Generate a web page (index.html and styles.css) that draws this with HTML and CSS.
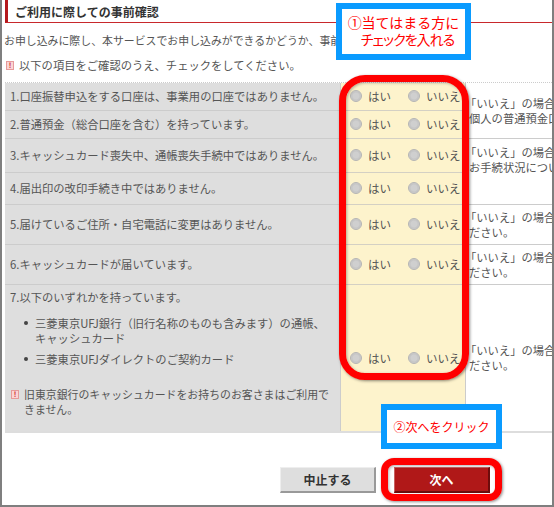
FILE: index.html
```html
<!DOCTYPE html>
<html lang="ja">
<head>
<meta charset="utf-8">
<title>ご利用に際しての事前確認</title>
<link rel="stylesheet" href="styles.css">
</head>
<body>
<div class="page">
  <h2 class="title">ご利用に際しての事前確認</h2>
  <p class="intro">お申し込みに際し、本サービスでお申し込みができるかどうか、事前にご確認ください。</p>
  <p class="notice"><span class="mark">!</span>以下の項目をご確認のうえ、チェックをしてください。</p>

  <div class="table">
    <div class="q r1">1.口座振替申込をする口座は、事業用の口座ではありません。</div>
    <div class="a r1"><label><input type="radio" name="q1">はい</label><label><input type="radio" name="q1">いいえ</label></div>
    <div class="n n1"><div>「いいえ」の場合は、<br>個人の普通預金口座を</div></div>

    <div class="q r2">2.普通預金（総合口座を含む）を持っています。</div>
    <div class="a r2"><label><input type="radio" name="q2">はい</label><label><input type="radio" name="q2">いいえ</label></div>

    <div class="q r3">3.キャッシュカード喪失中、通帳喪失手続中ではありません。</div>
    <div class="a r3"><label><input type="radio" name="q3">はい</label><label><input type="radio" name="q3">いいえ</label></div>
    <div class="n n3"><div>「いいえ」の場合は、<br>お手続状況について</div></div>

    <div class="q r4">4.届出印の改印手続き中ではありません。</div>
    <div class="a r4"><label><input type="radio" name="q4">はい</label><label><input type="radio" name="q4">いいえ</label></div>

    <div class="q r5">5.届けているご住所・自宅電話に変更はありません。</div>
    <div class="a r5"><label><input type="radio" name="q5">はい</label><label><input type="radio" name="q5">いいえ</label></div>
    <div class="n n5"><div>「いいえ」の場合は、<br>ださい。</div></div>

    <div class="q r6">6.キャッシュカードが届いています。</div>
    <div class="a r6"><label><input type="radio" name="q6">はい</label><label><input type="radio" name="q6">いいえ</label></div>
    <div class="n n6"><div>「いいえ」の場合は、<br>ださい。</div></div>

    <div class="q r7">
      <div>7.以下のいずれかを持っています。</div>
      <ul class="list">
        <li>三菱東京UFJ銀行（旧行名称のものも含みます）の通帳、<br>キャッシュカード</li>
        <li>三菱東京UFJダイレクトのご契約カード</li>
      </ul>
      <div class="warn"><span class="mark">!</span><span>旧東京銀行のキャッシュカードをお持ちのお客さまはご利用できません。</span></div>
    </div>
    <div class="a r7 low"><label><input type="radio" name="q7">はい</label><label><input type="radio" name="q7">いいえ</label></div>
    <div class="n n7"><div>「いいえ」の場合は、<br>ださい。</div></div>
  </div>

  <div class="buttons">
    <button class="btn cancel" type="button">中止する</button>
    <button class="btn next" type="button">次へ</button>
  </div>

  <div class="callout c1">①当てはまる方に<br><span class="tight">チェックを入れる</span></div>
  <div class="callout c2">②次へをクリック</div>
  <div class="ring ring-a"></div>
  <div class="ring ring-b"></div>
</div>
</body>
</html>
```
FILE: styles.css
```css
* { box-sizing: border-box; }
html, body { margin: 0; padding: 0; background: #fff; }
body { width: 554px; height: 507px; overflow: hidden; }
.page {
  position: relative;
  width: 554px;
  height: 507px;
  overflow: hidden;
  border-left: 2px solid #7f7f7f;
  border-right: 2px solid #7f7f7f;
  border-bottom: 2px solid #7f7f7f;
  font-family: "Noto Sans CJK JP", sans-serif;
  font-size: 11.3px;
  line-height: 15px;
  color: #555;
  background: #fff;
}
.title {
  margin: 0 0 0 3px;
  height: 23px;
  padding: 3px 0 0 7px;
  border-left: 3px solid #b5181c;
  border-bottom: 1px solid #c8282c;
  font-size: 12px;
  font-weight: 700;
  line-height: 18px;
  color: #333;
}
.intro {
  margin: 10px 0 0 2px;
  font-size: 10.9px;
  white-space: nowrap;
}
.notice {
  margin: 10px 0 0 4px;
  display: flex;
  align-items: center;
  white-space: nowrap;
}
.mark {
  flex: none;
  display: block;
  width: 8px;
  height: 9px;
  margin-right: 5px;
  background: #fbd4d4;
  border: 1px solid #e79a9a;
  color: #c8181c;
  font-size: 7px;
  font-weight: 700;
  line-height: 7px;
  text-align: center;
}
.table {
  margin: 9px 0 0 3px;
  display: grid;
  grid-template-columns: 335px 125px 87px;
  grid-template-rows: 28px 28px 34px 32px 40px 40px 146px;
  border-top: 1px dotted #ccc;
  border-bottom: 2px solid #ddd;
}
.q {
  background: #dedede;
  border-bottom: 1px solid #ccc;
  padding: 0 0 0 5px;
  display: flex;
  align-items: center;
  white-space: nowrap;
}
.a {
  background: #fdf3cc;
  border-bottom: 1px solid #d4d0c4;
  border-left: 1px solid #ccc;
  display: flex;
  align-items: center;
  padding: 0 0 0 9px;
  gap: 11px;
}
.a label { display: flex; align-items: center; width: 47px; white-space: nowrap; font-size: 11.5px; }
.a input {
  appearance: none;
  margin: 0 6px 2px 0;
  flex: none;
  width: 12px;
  height: 12px;
  border-radius: 50%;
  border: 1px solid #b4b4b4;
  background: radial-gradient(circle at 50% 50%, #cfcfcf 0 40%, #c4c4c4 60%, #f0f0f0 100%);
}
.n {
  padding-left: 3px;
  white-space: nowrap;
  overflow: hidden;
  border-bottom: 1px solid #ccc;
  display: flex;
  align-items: center;
  border-left: 1px solid #ccc;
  text-indent: -4px;
}
.n > div { overflow: visible; }
.n1 { grid-row: 1 / span 2; grid-column: 3; }
.n3 { grid-row: 3 / span 2; grid-column: 3; align-items: flex-start; padding-top: 6px; }
.n5 { grid-row: 5; grid-column: 3; }
.n6 { grid-row: 6; grid-column: 3; }
.n7 { grid-row: 7; grid-column: 3; border-bottom: 0; align-items: flex-start; padding-top: 58px; }
.r1 { grid-row: 1; }
.r2 { grid-row: 2; }
.r3 { grid-row: 3; }
.r4 { grid-row: 4; }
.r5 { grid-row: 5; }
.r6 { grid-row: 6; }
.r7 { grid-row: 7; }
.q.r7 {
  display: block;
  padding-top: 5px;
  border-bottom: 0;
}
.a.r7 { border-bottom: 0; align-items: flex-start; padding-top: 66px; }
.list {
  margin: 11px 0 0;
  padding: 0 0 0 25px;
  list-style: none;
}
.list li { position: relative; }
.list li + li { margin-top: 6px; }
.list li::before {
  content: "";
  position: absolute;
  left: -11px;
  top: 5px;
  width: 4px;
  height: 4px;
  border-radius: 50%;
  background: #444;
}
.warn {
  margin: 20px 0 0 1px;
  display: flex;
  white-space: normal;
  width: 325px;
  font-size: 10.9px;
}
.warn .mark { margin: 3px 5px 0 0; }
.warn span:last-child { display: block; }
.buttons {
  display: flex;
  justify-content: flex-end;
  gap: 18px;
  margin-top: 34px;
  padding-right: 62px;
}
.btn {
  height: 26px;
  width: 96px;
  font-family: inherit;
  font-size: 12px;
  font-weight: 700;
  border-style: solid;
  border-width: 1px 2px 2px 1px;
  padding: 0;
}
.cancel { background: #dedede; color: #333; border-color: #eee #999 #999 #eee; }
.next { background: #b01818; color: #fff; border-color: #c86060 #6d0c0c #6d0c0c #c86060; }
.callout {
  position: absolute;
  background: #fff;
  border: 6px solid #0a9bff;
  color: #f00;
  text-align: center;
  white-space: nowrap;
}
.tight { font-feature-settings: "palt" 1; letter-spacing: -1px; margin-left: 8px; }
.c1 { left: 334px; top: 3px; width: 135px; height: 57px; font-size: 14px; line-height: 17px; padding-top: 5px; }
.c2 { left: 379px; top: 404px; width: 121px; height: 45px; font-size: 12px; line-height: 33px; }
.ring {
  position: absolute;
  border: 7px solid #f00;
  background: transparent;
  box-shadow: 1px 1px 3px rgba(0,0,0,.45), inset 1px 1px 3px rgba(0,0,0,.3);
}
.ring-a { left: 337px; top: 75px; width: 130px; height: 305px; border-radius: 26px; }
.ring-b { left: 379px; top: 458px; width: 121px; height: 43px; border-radius: 13px; }
```
